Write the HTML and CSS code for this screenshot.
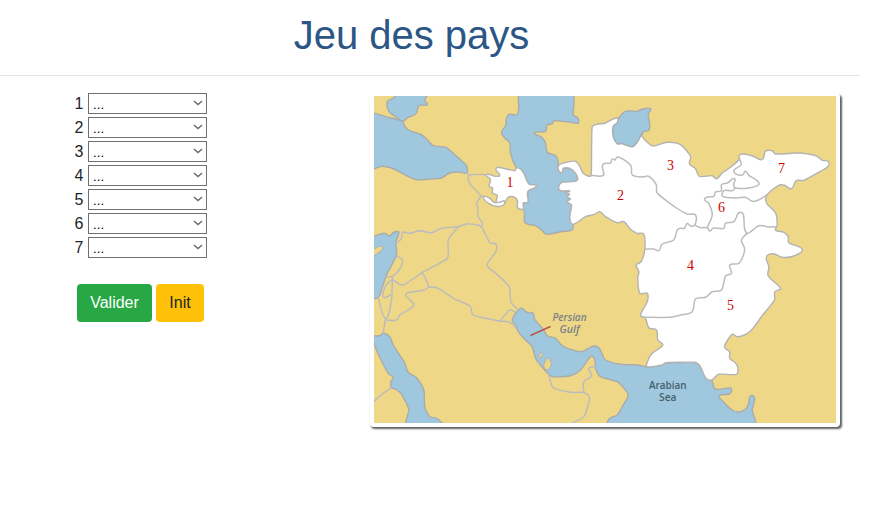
FILE: index.html
```html
<!DOCTYPE html>
<html lang="fr">
<head>
<meta charset="utf-8">
<title>Jeu des pays</title>
<link rel="stylesheet" href="styles.css">
</head>
<body>
<div class="page">
<header class="header"><h1 class="title">Jeu des pays</h1></header>
<main class="content">
<form class="quiz">
<div class="row"><span class="num">1</span><span class="field"><select class="pick"><option>...</option></select><svg class="chevron" viewBox="0 0 10 6"><path d="M1 1L5 4.6L9 1"/></svg></span></div>
<div class="row"><span class="num">2</span><span class="field"><select class="pick"><option>...</option></select><svg class="chevron" viewBox="0 0 10 6"><path d="M1 1L5 4.6L9 1"/></svg></span></div>
<div class="row"><span class="num">3</span><span class="field"><select class="pick"><option>...</option></select><svg class="chevron" viewBox="0 0 10 6"><path d="M1 1L5 4.6L9 1"/></svg></span></div>
<div class="row"><span class="num">4</span><span class="field"><select class="pick"><option>...</option></select><svg class="chevron" viewBox="0 0 10 6"><path d="M1 1L5 4.6L9 1"/></svg></span></div>
<div class="row"><span class="num">5</span><span class="field"><select class="pick"><option>...</option></select><svg class="chevron" viewBox="0 0 10 6"><path d="M1 1L5 4.6L9 1"/></svg></span></div>
<div class="row"><span class="num">6</span><span class="field"><select class="pick"><option>...</option></select><svg class="chevron" viewBox="0 0 10 6"><path d="M1 1L5 4.6L9 1"/></svg></span></div>
<div class="row"><span class="num">7</span><span class="field"><select class="pick"><option>...</option></select><svg class="chevron" viewBox="0 0 10 6"><path d="M1 1L5 4.6L9 1"/></svg></span></div>
<div class="actions"><button type="button" class="btn btn-ok">Valider</button><button type="button" class="btn btn-init">Init</button></div>
</form>
<div class="frame">
<svg class="map" viewBox="373.5 96 462.5 327">
<rect class="land" x="373" y="96" width="464" height="328"/>
<g class="sea">
<!-- Black Sea and Sea of Azov -->
<path d="M370 112L373 113L388 117.3L402 121.3L404 126L408 130L419.3 134L424 137L428 141L432.7 145.7L445.3 147.3L449 150L454.3 154.7L465.3 164.7L467 169.7L466 173L459 172L452.7 172.3L447 174L441 178L430 179L416 179.7L405.3 175.3L396.7 170.7L391 168L387 167L381 166.3L370 168Z"/>
<path d="M402 121.3L396 117.3L388.3 111.3L386.7 102L391 99L400 94H426L424.3 100.7L427 104.7L420 105L417.7 107L416 113L412 116L407.7 117.3Z"/>
<!-- Caspian Sea -->
<path d="M519.5 94L518.3 108L517 114L514 115L509.3 114.2L506 118L505.3 125.3L501 132.3L504.3 138L509.3 143L510 153L516 168L520 169L524 174.7L528.3 184L535.7 185.7L531.7 188.7L527.3 191.3V202.3L522.7 203L524 213V221.7L527 224L535 225.7L541 230L545 234L548.3 234.3L559 232L566.7 231L572 229.3L572.3 223.3L569.3 216.7L571 205L566.7 201.7L570 199L566.7 197L569 194L565 193L569 191L560 190.7L558.3 186.3L561.7 182.3L575 181.3L577.3 178L571.7 169.7L563.3 168L559.5 170L560.7 173L557.7 169.7V166.3L557.3 159.7L555 155.7L546.7 152L545 143L541 137L534 133L545 131.3L546.7 124.7L551.7 124L553.3 120.7L570 122.3L574 123L577.7 123L577.3 118L572.7 114.7L572.3 94Z"/>
<!-- Mediterranean and Red Sea -->
<path d="M370 240L383.3 233.3L389.3 235.7L393 232.5L398.3 232.3L395.3 241.7L396 255L386 275L381 290L377.7 297.3H370Z"/>
<path d="M370 335.7H379.3L382.7 333.3L389.3 336.7L392.7 345L404.3 363.3L407.7 372.3L416 377.7L423.3 390L424.3 406.7L429.3 416.7L436 418.3L442 426H406L408.3 410L405.3 402.3L401 394.3L395 389L391 387.7L390.3 381.7L392.7 377.7L387.7 373.3L376.7 351.7L370 335Z"/>
<!-- Persian Gulf and Arabian Sea -->
<path d="M511.7 320L520 308.3L526.7 312.3L532.7 313.3L534 319L543.3 330L546.7 335.7L555 338.3L560 344L565 347.7L580 351.7L587 349L593.3 346L598.3 347.7L602 355L605 360L620 364.3L636.7 365L646.7 366.7L661.7 365L665 362.7L680 362.7L694 362.3L700 366.7L705 377.7L711 380L715 389L730 388L731 391L729 394L719 395.7L722 401L731.7 410L738.3 412L745 409.3L748 404L749 397.7L751 395.5L753.8 397L753.5 403L751.7 410L754.5 426H607L609.3 418.3L616.7 415L622 406L627.7 395.7L624 389L616.7 381.7L600 376.7L595 368.3L594.3 360L590.7 356L580 370L570 375.7L551.7 376.7L546 372L540 365L535 358.3L531.7 346.7L525 340L517.7 331.7L515.3 325Z"/>
</g>
<g class="country">
<path d="M516 168L514.3 170.7L497.7 167.3L495.3 169.7L499.3 175.3L494.3 176.3L486 174.7L490 179.7L488.7 186.3L492 188V193L496.7 195.3L496 202L502.7 204.7L507.7 197.3H514.3L517 201.3V207.5L522.7 209V203L527.3 202.3V191.3L535.7 186L528.3 184L524 174.7L520 169Z"/>
<path d="M483 197L489 198L494 202.5L500 202L504 201L503 205L497 206.5L488 203.3Z"/>
<path d="M557.7 166.3L563.3 163L575 161.3L579.3 166.3L583.3 173.7L590.7 175.3L591.7 127L605 123L616.7 118L630 126L642 133L641.7 136.3L646.7 142.3L652.7 146L666.7 142.3L680 144.7L690 156.3L689 164L695 168.7L699 176.3L711.7 175.7L716 178.7L721.7 173L730 167.3L739 159L738.3 155.7L743.3 154L752 156L760 159.7L763 158L765 151.3L771.7 150.7L775 154L796.7 153L808 154L816.7 156.3L821.7 160.3L827.7 161.3V166.3L820 171.3L803.3 180.3L795.7 180.7L791 188.7L784 185.3H778.3L766.7 194.7L766 203L775 212.7L776.7 225L775 230L783.3 232.3L787.7 236.7L788.3 242.7L801.7 249.3L793.3 256L781.7 257.3L774 254L768 254.5L765.7 258.3L768.3 266.7L767.7 276L780 288.3L774.3 291.7L774 300L761.7 315.7L755 325L750 331L744 335L736.7 336.7L731.7 334.3L724 346.7L729 351.7L729.3 358.3L735 363L737.3 367.7L736 374.3L718.3 374.3L711 380L705 377.7L700 366.7L694 362.3L665 362.7L661.7 365L646.7 366.7L647.7 360L651.7 353.3L662.3 345L657.3 340L656 330L648.3 327.7L645 318.3L640 315L646.7 301.7V293.3H639.3L637.3 278.3L638.3 271.7L635.7 265L640.7 261.7L644.3 249.3L643.3 234L636.7 233.3L630 229.3L623.3 221.7L616.7 222.7L605 216.7L599.3 211.7L594 214.3L585 216.7L572.3 224.3L569.3 216.7L571 205L566.7 201.7L570 199L566.7 197L569 194L565 193L569 191L560 190.7L558.3 186.3L561.7 182.3L575 181.3L577.3 178L571.7 169.7L563.3 168L560.7 173Z"/>
</g>
<g class="sea">
<path d="M618.3 118L625 111.3L636.7 111.3L640 109.7L650 108.7L647.7 114.7L649.3 124.7L648.3 130.3L642.7 132L637.3 141.3L631.7 146.7L621.7 143.7H616.7L612.7 136.3V126.3L616.7 123Z"/>
</g>
<g class="isle">
<path d="M370 251L373 249.3L381 246L381.5 250L373 255.7L370 256Z"/>
<path d="M546.7 358L550.5 362L550 367L546.5 370L543 366L544.5 362Z"/>
<path d="M541 353L542 355L540 357.5L538 356Z"/>
</g>
<g class="border">
<path d="M590.7 175.3H602.7L601.7 166.3L604 163.5L610 163L611.7 159L614.5 160L616.7 157L623.3 159.7L630.7 166.3L631.7 174.7L642 177L648.3 176.3L655.7 184.7L656.7 193L676 208L686.7 214L695 215L694.3 225L690 226L686.7 223.5L684 228.3H680L676.7 230L673.3 240L661.7 244L658.3 250.7L653 249L644.3 249.3"/>
<path d="M694.3 225L699 227.5L706.7 227.7L709.3 231L713 228L723.3 228.3L725 223.3L733.3 221.7L738.3 212.7L742.7 214L744 228.3L746.7 233.3L751 231L759 225.5L768 227L775 226.7"/>
<path d="M746.7 233.3L741 240L744 248.3L743 255L738.3 263.3L729.3 265L731 273.3L725 276L721 290L711.7 291.7L705 297.3L695 299L691.7 311.7L680 315L670 317.3H641.7"/>
<path d="M706.7 227.7L711.7 215L708.3 203.3L704 199.7L707 197L713.3 196.3L715 192L720.7 190.7L721 184.7L727 183L734 178.7L733 185L735 188L748 188L758.3 184.7L756.7 180.7L748.3 175.3L745 171.3L741.7 175.3L733.3 171.3L740.7 164.7L739 159"/>
<path d="M735 188L731.7 190.7H723.3L722.3 196.3L736.7 198L745 197.3L751.7 201.3L758 200L766.7 194.7"/>
</g>
<g class="line">
<path d="M396 243.3L401 238.3L402 232.3L409.3 233.3L419.3 230.7L431 232.7L441 228.3L457.7 226.7L466 224L474 224.5L481 226.7L489.3 242.7L495.3 244V251.7L486.7 265L495 273L508.7 286.7L510.3 301.7L517.7 310"/>
<path d="M481 226.7L482 223.3L477.7 216.7L477 206L476 203L480 195.7L470 184.7L468.7 175.3L486 174.7M466 173L469 175.3M480 195.7L483 197M522.7 209L524 213"/>
<path d="M457.7 226.7L447.7 240L447 258.3L422 272.3L402.7 285L392.7 280M422 272.3L427.7 286.7L421 290.7L405.3 294.3L413.3 305L399.3 315L396 320H386M427.7 286.7L437.7 288.3L454.3 299L469.3 306L472.7 315L489.3 319L499.3 321L509.3 322.3L515.3 327.7M499.3 321L509.3 310L514 312"/>
<path d="M396.7 256L402 260L398.7 270L391 276.7H386M392 276.7L391 300L385 318.3L377.7 297.3M391 280L385 286L383 297L390 295M385 318L382.7 333.3M391 387.7L382.7 393.3L373 401.7"/>
<path d="M548.3 375L552.7 387.7L570 392.3L583.3 392.7L589 398.3L583.3 416.7L571.7 423M583.3 392.7V381.7L591 375.7L588.3 368.3L595 367"/>
</g>
<path class="pointer" d="M530 335.5L550 326.5"/>
<g class="place gulf"><text x="552" y="321" textLength="34" lengthAdjust="spacingAndGlyphs">Persian</text><text x="559" y="333" textLength="20" lengthAdjust="spacingAndGlyphs">Gulf</text></g>
<g class="place"><text x="648.5" y="389" textLength="37.5" lengthAdjust="spacingAndGlyphs">Arabian</text><text x="658.5" y="401" textLength="17.5" lengthAdjust="spacingAndGlyphs">Sea</text></g>
<g class="mark"><text x="509.5" y="187">1</text><text x="620" y="200">2</text><text x="670" y="170">3</text><text x="690" y="270">4</text><text x="730" y="310">5</text><text x="721" y="212">6</text><text x="781" y="173">7</text></g>
</svg>
</div>
</main>
</div>
<script src="smooth.js"></script>
</body>
</html>
```
FILE: smooth.js
```js
// Rounds the coastlines and borders: each polyline becomes a chain of short-handled Bezier curves.
function parse(d) {
  const subs = [];
  let sub, x = 0, y = 0;
  for (const [, c, args] of d.matchAll(/([MLHVZ])([^MLHVZ]*)/g)) {
    const n = args.trim().split(/\s+/).map(Number);
    if (c === 'Z') { sub.closed = true; continue; }
    if (c === 'M') { sub = { pts: [], closed: false }; subs.push(sub); }
    if (c === 'H') x = n[0];
    else if (c === 'V') y = n[0];
    else { x = n[0]; y = n[1]; }
    sub.pts.push([x, y]);
  }
  return subs;
}

function smooth({ pts, closed }) {
  const n = pts.length;
  const at = i => closed ? pts[(i + n) % n] : pts[Math.max(0, Math.min(n - 1, i))];
  const tangent = i => {
    const a = at(i - 1), b = at(i + 1);
    const len = Math.hypot(b[0] - a[0], b[1] - a[1]) || 1;
    return [(b[0] - a[0]) / len, (b[1] - a[1]) / len];
  };
  let out = 'M' + pts[0].join(' ');
  for (let i = 0; i < (closed ? n : n - 1); i++) {
    const p = at(i), q = at(i + 1), s = tangent(i), t = tangent(i + 1);
    const h = Math.min(3.5, Math.hypot(q[0] - p[0], q[1] - p[1]) * 0.33);
    out += 'C' + [p[0] + s[0] * h, p[1] + s[1] * h, q[0] - t[0] * h, q[1] - t[1] * h, q[0], q[1]].map(v => v.toFixed(2)).join(' ');
  }
  return out + (closed ? 'Z' : '');
}

document.querySelectorAll('.map g path').forEach(p => {
  p.setAttribute('d', parse(p.getAttribute('d')).map(smooth).join(''));
});
```
FILE: styles.css
```css
* { box-sizing: border-box; }
body { margin: 0; background: #fff; color: #212529; font: 16px/24px "Liberation Sans", Arial, sans-serif; }
.page { width: 860px; }
.header { height: 76px; padding-top: 11px; border-bottom: 1px solid #e5e5e5; }
.title { margin: 0 0 0 -37px; text-align: center; font-size: 40px; line-height: 48px; font-weight: 400; color: #2b5685; }
.content { display: flex; align-items: flex-start; padding: 15px 0 20px; }
.quiz { width: 370px; padding-left: 74.5px; }
.row { display: flex; align-items: center; height: 24px; }
.num { width: 13.5px; padding-top: 1px; }
.field { display: grid; align-items: center; width: 119px; height: 21px; }
.pick { grid-area: 1 / 1; appearance: none; width: 119px; height: 21px; margin: 0; padding: 3px 4px 0; border: 1px solid #707070; border-radius: 0; background: #fff; color: #000; font: 13.33px "Liberation Sans", Arial, sans-serif; }
.chevron { grid-area: 1 / 1; justify-self: end; width: 10px; height: 6px; margin-right: 4px; fill: none; stroke: #6b6b6b; stroke-width: 1.5; pointer-events: none; }
.actions { display: flex; gap: 4px; margin: 25px 0 0 2.5px; }
.btn { height: 38px; padding: 0; border: 0; border-radius: 4px; font: 16px "Liberation Sans", Arial, sans-serif; }
.btn-ok { width: 75px; background: #28a745; color: #fff; }
.btn-init { width: 48px; background: #ffc107; color: #212529; }
.frame { width: 470px; height: 334px; margin-top: 2px; padding: 3px 4px 4px 3.5px; border-radius: 4px; box-shadow: 1.5px 2px 2px #606060; background: #fff; }
.map { display: block; width: 462.5px; height: 327px; overflow: hidden; }
.land { fill: #eed786; }
.map g { stroke-linejoin: round; stroke-linecap: round; }
.sea { fill: #9fc8de; stroke: #a9abad; stroke-width: 1.4; }
.country { fill: #fff; stroke: #b3b3b3; stroke-width: 1.4; }
.isle { fill: #eed786; stroke: #b3b5b5; stroke-width: 1.2; }
.border { fill: none; stroke: #bcbcbc; stroke-width: 1.5; }
.line { fill: none; stroke: #babbc0; stroke-width: 1.4; }
.pointer { fill: none; stroke: #b45a40; stroke-width: 1.5; }
.map .place { fill: #46606b; stroke: none; font: 600 11px "Open Sans", "Noto Sans", sans-serif; }
.map .gulf { fill: #7b8287; font-style: italic; }
.mark { fill: #d00000; font: 14px "Liberation Serif", "Times New Roman", serif; text-anchor: middle; }
```
